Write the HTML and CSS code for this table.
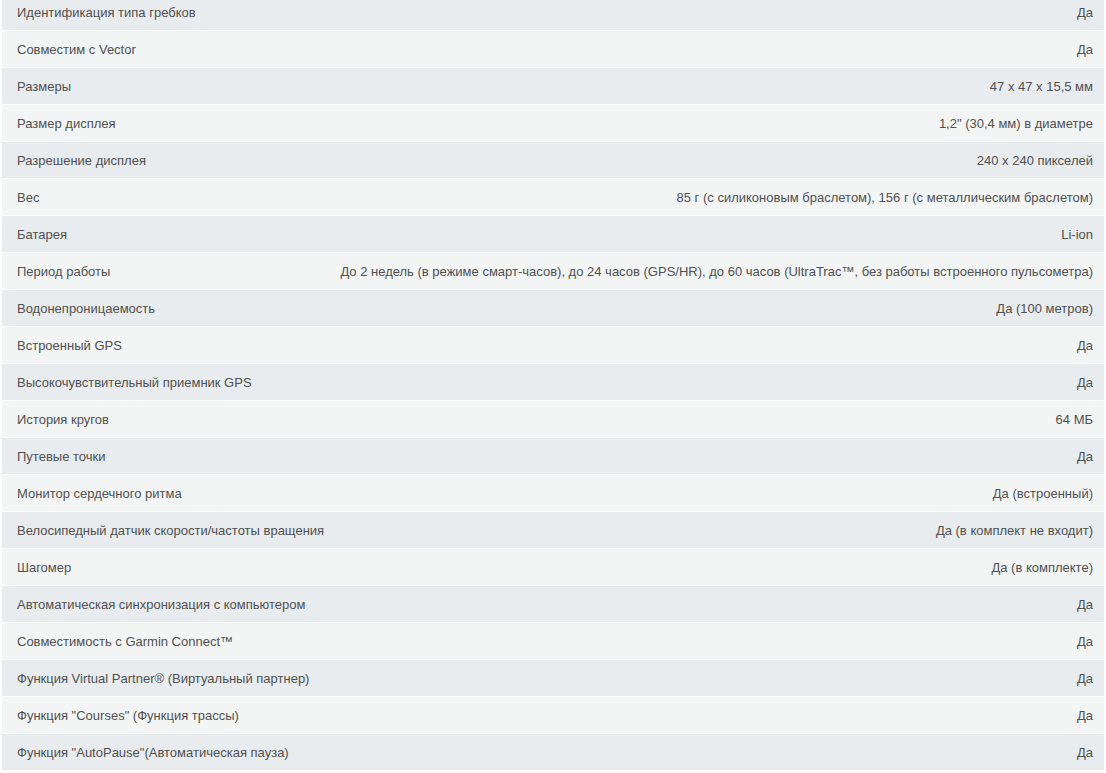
FILE: index.html
```html
<html>
    <head>
        <link rel="stylesheet" href="styles.css">
    </head>
    <body>
        <div class="specs">
            <div class="spec-row"><span>Идентификация типа гребков</span><span>Да</span></div>
            <div class="spec-row"><span>Совместим с Vector</span><span>Да</span></div>
            <div class="spec-row"><span>Размеры</span><span>47 x 47 x 15,5 мм</span></div>
            <div class="spec-row"><span>Размер дисплея</span><span>1,2" (30,4 мм) в диаметре</span></div>
            <div class="spec-row"><span>Разрешение дисплея</span><span>240 x 240 пикселей</span></div>
            <div class="spec-row"><span>Вес</span><span>85 г (с силиконовым браслетом), 156 г (с металлическим браслетом)</span></div>
            <div class="spec-row"><span>Батарея</span><span>Li-ion</span></div>
            <div class="spec-row"><span>Период работы</span><span>До 2 недель (в режиме смарт-часов), до 24 часов (GPS/HR), до 60 часов (UltraTrac™, без работы встроенного пульсометра)</span></div>
            <div class="spec-row"><span>Водонепроницаемость</span><span>Да (100 метров)</span></div>
            <div class="spec-row"><span>Встроенный GPS</span><span>Да</span></div>
            <div class="spec-row"><span>Высокочувствительный приемник GPS</span><span>Да</span></div>
            <div class="spec-row"><span>История кругов</span><span>64 МБ</span></div>
            <div class="spec-row"><span>Путевые точки</span><span>Да</span></div>
            <div class="spec-row"><span>Монитор сердечного ритма</span><span>Да (встроенный)</span></div>
            <div class="spec-row"><span>Велосипедный датчик скорости/частоты вращения</span><span>Да (в комплект не входит)</span></div>
            <div class="spec-row"><span>Шагомер</span><span>Да (в комплекте)</span></div>
            <div class="spec-row"><span>Автоматическая синхронизация с компьютером</span><span>Да</span></div>
            <div class="spec-row"><span>Совместимость с Garmin Connect™</span><span>Да</span></div>
            <div class="spec-row"><span>Функция Virtual Partner® (Виртуальный партнер)</span><span>Да</span></div>
            <div class="spec-row"><span>Функция "Courses" (Функция трассы)</span><span>Да</span></div>
            <div class="spec-row"><span>Функция "AutoPause"(Автоматическая пауза)</span><span>Да</span></div>
        </div>
    </body>
</html>
```
FILE: styles.css
```css
body{
    margin: 0;
    background-color: #ffffff;
    font-family: "Liberation Sans Narrow", "Liberation Sans", sans-serif;
    font-size: 13px;
    color: #505050;
    overflow: hidden;
}
.specs{
    margin-top: -6px;
    padding: 0 2px;
    display: flex;
    flex-direction: column;
    gap: 1px;
}
.spec-row{
    display: flex;
    justify-content: space-between;
    align-items: center;
    height: 36px;
    padding: 0 11px 0 15px;
    white-space: nowrap;
}
.spec-row:nth-child(odd){
    background-color: #e9ecee;
}
.spec-row:nth-child(even){
    background-color: #f3f5f5;
}
```
